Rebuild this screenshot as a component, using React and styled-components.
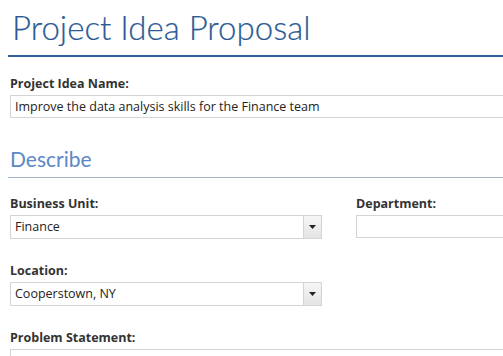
import { createGlobalStyle, styled } from "styled-components";

const GlobalStyle = createGlobalStyle`
  html, body {
    margin: 0;
    padding: 0;
    background: #fff;
    overflow: hidden;
  }
  body {
    font-family: "Open Sans", "Liberation Sans", sans-serif;
    color: #333;
  }
`;

function Caret() {
  return (
    <svg width="7" height="4" viewBox="0 0 7 4">
      <path d="M0 0 H7 L3.5 4 Z" fill="#222" />
    </svg>
  );
}

function Select({ value }) {
  return (
    <SelectBox>
      <SelectValue>{value}</SelectValue>
      <SelectButton>
        <Caret />
      </SelectButton>
    </SelectBox>
  );
}

export default function App() {
  return (
    <>
      <GlobalStyle />
      <Page>
        <Title>Project Idea Proposal</Title>
        <Form>
          <Field>
            <Label>Project Idea Name:</Label>
            <TextBox>Improve the data analysis skills for the Finance team</TextBox>
          </Field>
          <Section>Describe</Section>
          <Row>
            <Field>
              <Label>Business Unit:</Label>
              <Select value="Finance" />
            </Field>
            <Field>
              <Label>Department:</Label>
              <TextBox />
            </Field>
          </Row>
          <Row>
            <Field>
              <Label>Location:</Label>
              <Select value="Cooperstown, NY" />
            </Field>
          </Row>
          <Row>
            <Field $wide>
              <Label>Problem Statement:</Label>
              <TextArea />
            </Field>
          </Row>
        </Form>
      </Page>
    </>
  );
}

const Page = styled.div`
  width: 760px;
  padding: 0 0 0 8px;
`;

const Title = styled.h1`
  margin: 0;
  padding: 5px 0 5px 4px;
  font-family: Lato, "Open Sans", sans-serif;
  font-size: 33px;
  font-weight: 300;
  line-height: 45px;
  color: #2b5a94;
  border-bottom: 2px solid #2f5f98;
  -webkit-text-stroke: 0.2px #2b5a94;
`;

const Form = styled.div`
  padding: 18px 0 0 2px;
  display: flex;
  flex-direction: column;
`;

const Field = styled.div`
  display: flex;
  flex-direction: column;
  gap: 3px;
  grid-column: ${(props) => (props.$wide ? "1 / -1" : "auto")};
`;

const Label = styled.div`
  font-size: 12.5px;
  font-weight: 700;
  line-height: 17px;
  color: #333;
`;

const TextBox = styled.div`
  box-sizing: border-box;
  height: 23px;
  border: 1px solid #d4d4d4;
  padding: 0 4px;
  font-size: 12.5px;
  line-height: 21px;
  color: #222;
  white-space: nowrap;
`;

const Section = styled.h2`
  margin: 27px 0 -6px -2px;
  padding: 0 0 4px 2px;
  font-family: Lato, "Open Sans", sans-serif;
  font-size: 21px;
  font-weight: 400;
  line-height: 28px;
  color: #5b87c6;
  border-bottom: 1px solid #a4b4c8;
`;

const Row = styled.div`
  display: grid;
  grid-template-columns: 312px 1fr;
  column-gap: 34px;
  margin-top: 23px;
`;

const SelectBox = styled.div`
  box-sizing: border-box;
  height: 24px;
  border: 1px solid #d4d4d4;
  display: flex;
  align-items: stretch;
`;

const SelectValue = styled.div`
  flex: 1;
  padding: 0 4px;
  font-size: 12.5px;
  line-height: 22px;
  color: #222;
`;

const SelectButton = styled.div`
  width: 17px;
  border-left: 1px solid #d4d4d4;
  background: linear-gradient(#f6f6f6, #e4e4e4);
  display: flex;
  align-items: center;
  justify-content: center;
`;

const TextArea = styled.div`
  box-sizing: border-box;
  height: 60px;
  border: 1px solid #d4d4d4;
`;
